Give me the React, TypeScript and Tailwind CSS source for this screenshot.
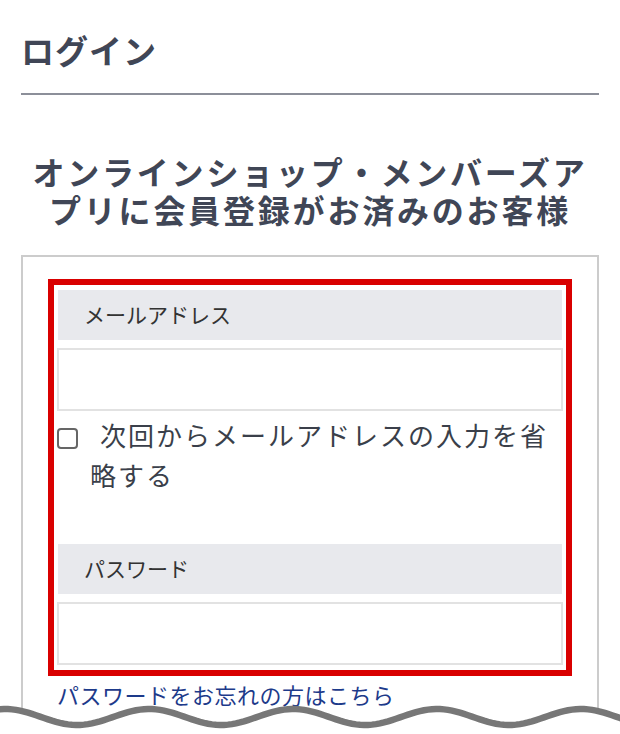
import { useState } from "react";

const FONT = '"Noto Sans CJK JP", "Noto Sans", sans-serif';

// 下端の波線（スクリーンショットの切れ目）
function WaveCut() {
  const pts: string[] = [];
  for (let x = -4; x <= 624; x += 4) {
    const y = 19 - 8 * Math.cos((2 * Math.PI * (x - 5)) / 144);
    pts.push(`${x},${y.toFixed(2)}`);
  }
  const line = "M" + pts.join(" L");
  const fill = line + " L624,60 L-4,60 Z";
  return (
    <svg
      className="absolute left-0 bottom-0 w-[620px] h-[36px]"
      viewBox="0 0 620 36"
      preserveAspectRatio="none"
    >
      <path d={fill} fill="#fff" />
      <path d={line} fill="none" stroke="#777" strokeWidth="6.5" />
    </svg>
  );
}

function FieldLabel({ text }: { text: string }) {
  return (
    <div className="mx-px h-[50px] flex items-center pl-[26px] bg-[#e8e9ed] text-[21px] text-[#333]">
      {text}
    </div>
  );
}

export default function App() {
  const [remember, setRemember] = useState(false);
  const [email, setEmail] = useState("");
  const [password, setPassword] = useState("");

  return (
    <div
      className="relative w-[620px] h-[734px] overflow-hidden bg-white"
      style={{ fontFamily: FONT }}
    >
      <div className="px-[21px]">
        <h1 className="pt-[27px] pb-[20px] text-[33px] leading-[46px] font-bold text-[#404656] tracking-[1px]">
          ログイン
        </h1>
        <hr className="border-0 h-[2px] bg-[#8c8f99]" />

        <h2 className="mt-[57px] mb-[27px] text-center text-[32px] leading-[38px] font-bold text-[#404656] tracking-[2.8px]">
          オンラインショップ・メンバーズア
          <br />
          プリに会員登録がお済みのお客様
        </h2>

        <div className="border-2 border-[#cccccc] pt-[22px] px-[25px] pb-[40px]">
          <div className="border-[6px] border-[#d90000] px-[3px] pt-[5px] pb-[5px]">
            <FieldLabel text="メールアドレス" />
            <input
              type="email"
              value={email}
              onChange={(e) => setEmail(e.target.value)}
              className="mt-[8px] block w-full h-[63px] border-2 border-[#e2e2e2] outline-none px-3 text-[20px]"
            />

            <label className="mt-[4px] block pl-[33px] -indent-[33px] text-[26px] leading-[40px] text-[#3a3f4a] tracking-[2px]">
              <input
                type="checkbox"
                checked={remember}
                onChange={(e) => setRemember(e.target.checked)}
                className="appearance-none align-[-3px] w-[21px] h-[21px] mr-[22px] border-2 border-[#666] rounded-[4px] bg-white"
              />
              次回からメールアドレスの入力を省略する
            </label>

            <div className="mt-[49px]">
              <FieldLabel text="パスワード" />
            </div>
            <input
              type="password"
              value={password}
              onChange={(e) => setPassword(e.target.value)}
              className="mt-[8px] block w-full h-[63px] border-2 border-[#e2e2e2] outline-none px-3 text-[20px]"
            />
          </div>

          <a
            href="#"
            className="block mt-[3px] pl-[9px] text-[22px] leading-[30px] text-[#1d3a8a] tracking-[0.5px]"
          >
            パスワードをお忘れの方はこちら
          </a>
        </div>
      </div>
      <WaveCut />
    </div>
  );
}
